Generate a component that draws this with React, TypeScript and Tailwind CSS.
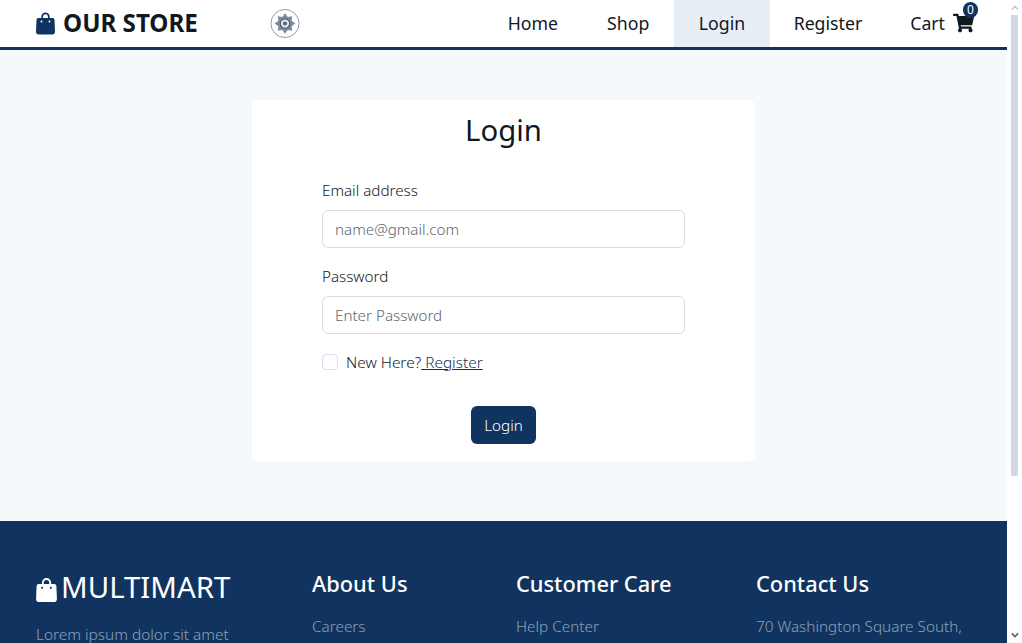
import React from "react";
import { FaShoppingCart } from "react-icons/fa";

const sans = { fontFamily: '"Noto Sans", sans-serif' };

// 8 point star for the little emblem in the navbar
const starPoints = Array.from({ length: 16 }, (_, i) => {
  const r = i % 2 === 0 ? 11 : 7.6;
  const a = (i * Math.PI) / 8 - Math.PI / 2;
  return `${16 + r * Math.cos(a)},${16 + r * Math.sin(a)}`;
}).join(" ");

function BagIcon({ className }: { className?: string }) {
  return (
    <svg viewBox="0 0 20 24" className={className} fill="currentColor">
      <path d="M5.6 8V5.4a4.4 4.4 0 0 1 8.8 0V8h-1.8V5.4a2.6 2.6 0 0 0-5.2 0V8z" />
      <path
        d="M2.5 6.8h15A2 2 0 0 1 19.5 8.6L20 21a3 3 0 0 1-3 3H3a3 3 0 0 1-3-3L.5 8.6A2 2 0 0 1 2.5 6.8zM5.8 9.4a1 1 0 1 0 0 2 1 1 0 0 0 0-2zm8.4 0a1 1 0 1 0 0 2 1 1 0 0 0 0-2z"
        fillRule="evenodd"
      />
    </svg>
  );
}

function Emblem() {
  return (
    <svg viewBox="0 0 32 32" className="w-[30px] h-[31px]">
      <circle cx="16" cy="16" r="15" fill="white" stroke="#8496ad" strokeWidth="1" />
      <polygon points={starPoints} fill="#7c8a9b" />
      <circle cx="16" cy="16" r="5" fill="#e3e8ee" stroke="#4a5a6e" strokeWidth="1.2" />
      <circle cx="16" cy="16" r="2.2" fill="#55647a" />
    </svg>
  );
}

function NavLink({ label, className }: { label: string; className: string }) {
  return <a className={`h-[47px] flex items-center text-[17.7px] text-[#11181f] ${className}`}>{label}</a>;
}

function Field({ label, placeholder, type }: { label: string; placeholder: string; type: string }) {
  return (
    <div className="mb-[16px]">
      <label className="block text-[15.2px] leading-[24px] mb-[8px] font-light text-[#11181f]">{label}</label>
      <input
        type={type}
        placeholder={placeholder}
        className="w-full h-[38px] px-[12px] rounded-[6px] border border-[#d5dfe9] bg-white text-[15.2px] font-light outline-none placeholder:text-[#5f6670]"
      />
    </div>
  );
}

function FooterCol({ title, item, width }: { title: string; item: string; width: string }) {
  return (
    <div className={width}>
      <h5 className="text-[21.8px] leading-[26px] font-medium text-white mb-[17px]">{title}</h5>
      <p className="text-[15.3px] leading-[24px] font-light text-[#8fa0b7]">{item}</p>
    </div>
  );
}

export default function App() {
  return (
    <div className="h-screen overflow-hidden flex bg-white" style={sans}>
      <div className="w-[1007px] h-full overflow-hidden flex flex-col">
        {/* Navbar */}
        <header className="h-[50px] shrink-0 bg-white border-b-[3px] border-[#10345f] flex items-center pl-[36px]">
          <a className="flex items-center gap-[8px] w-[234px] text-[#11181f]">
            <BagIcon className="w-[19px] h-[24px] text-[#10345f]" />
            <span className="text-[24.2px] font-bold leading-none">OUR STORE</span>
          </a>
          <Emblem />
          <nav className="ml-auto flex items-center pr-[33px]">
            <NavLink label="Home" className="pl-[25px] pr-[24px]" />
            <NavLink label="Shop" className="px-[25px]" />
            <NavLink label="Login" className="px-[24.5px] bg-[#e7eef6]" />
            <NavLink label="Register" className="px-[24px]" />
            <a className="relative flex items-center pl-[24px] gap-[8px] text-[17.7px] text-[#11181f]">
              Cart
              <FaShoppingCart className="w-[21px] h-[20px]" />
              <span className="absolute -top-[8px] -right-[4px] w-[15px] h-[16px] rounded-full bg-[#10345f] text-white text-[12px] flex items-center justify-center">
                0
              </span>
            </a>
          </nav>
        </header>

        {/* Login form */}
        <main className="h-[471px] shrink-0 bg-[#f5f9fc] pt-[50px]">
          <div className="w-[503px] h-[361px] mx-auto bg-white rounded-[6px] px-[70px]">
            <h1 className="text-[29.3px] leading-[40px] text-center text-[#11181f] pt-[10px] h-[78px]">Login</h1>
            <Field label="Email address" placeholder="name@gmail.com" type="email" />
            <Field label="Password" placeholder="Enter Password" type="password" />
            <div className="flex items-center gap-[8px] h-[24px] text-[15.4px] font-light text-[#11181f]">
              <input type="checkbox" className="appearance-none w-[16px] h-[16px] rounded-[4px] border border-[#d5dfe9] bg-white" />
              <span className="pt-[1px]">
                New Here?
                <a className="text-[#10345f] underline"> Register</a>
              </span>
            </div>
            <div className="flex justify-center mt-[32px]">
              <button className="h-[38px] w-[65px] rounded-[6px] bg-[#10345f] text-white text-[15.2px] font-light">Login</button>
            </div>
          </div>
        </main>

        {/* Footer */}
        <footer className="flex-1 bg-[#10345f] pl-[36px] pt-[50px] flex">
          <div className="w-[276px]">
            <div className="flex items-center gap-[4px] text-white h-[34px]">
              <BagIcon className="w-[21px] h-[25px] mt-[3px]" />
              <span className="text-[29.4px] leading-none">MULTIMART</span>
            </div>
            <p className="text-[15.4px] leading-[24px] font-light text-[#8fa0b7] mt-[18px]">Lorem ipsum dolor sit amet</p>
          </div>
          <FooterCol title="About Us" item="Careers" width="w-[204px]" />
          <FooterCol title="Customer Care" item="Help Center" width="w-[240px]" />
          <FooterCol title="Contact Us" item="70 Washington Square South," width="flex-1" />
        </footer>
      </div>

      {/* Scrollbar */}
      <div className="relative w-[15px] h-full bg-white">
        <svg viewBox="0 0 10 6" className="absolute top-[5px] left-[4px] w-[8px] h-[6px]" fill="none" stroke="#c4ccd4" strokeWidth="2">
          <path d="M1 5l4-4 4 4" />
        </svg>
        <div className="absolute top-[15px] left-[4px] w-[7px] h-[461px] rounded-b-[2px] bg-[#d0dae4]" />
        <svg viewBox="0 0 10 6" className="absolute bottom-[5px] left-[4px] w-[8px] h-[6px]" fill="none" stroke="#5b6570" strokeWidth="2">
          <path d="M1 1l4 4 4-4" />
        </svg>
      </div>
    </div>
  );
}
